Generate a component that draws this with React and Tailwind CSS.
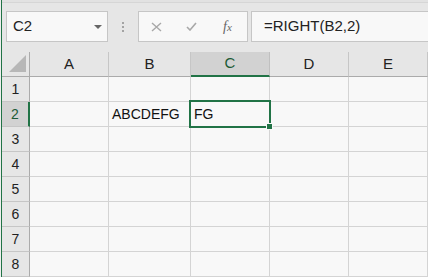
import { useState } from "react";

const columns = [
  { name: "A", w: "w-[79px]" },
  { name: "B", w: "w-[82px]" },
  { name: "C", w: "w-[79px]" },
  { name: "D", w: "w-[79px]" },
  { name: "E", w: "flex-1" },
];

const rows = [1, 2, 3, 4, 5, 6, 7, 8];

const cells = {
  B2: "ABCDEFG",
  C2: "FG",
};

const Toolbar = ({ active, formula }) => {
  return (
    <div className="flex items-center h-[31px] mt-[8px] mb-[10px]">
      {/* name box */}
      <div className="ml-[4px] w-[102px] h-full flex items-center justify-between border border-[#c6c6c6] bg-[#f8f8f8] pl-[6px] pr-[5px]">
        <span className="text-[15px] text-[#222]">{active}</span>
        <span className="w-0 h-0 border-l-[4px] border-r-[4px] border-t-[4px] border-l-transparent border-r-transparent border-t-[#666]"></span>
      </div>

      <div className="ml-[14px] flex flex-col gap-[2px]">
        <span className="w-[2px] h-[2px] bg-[#a3a3a3]"></span>
        <span className="w-[2px] h-[2px] bg-[#a3a3a3]"></span>
        <span className="w-[2px] h-[2px] bg-[#a3a3a3]"></span>
      </div>

      {/* cancel / enter / fx */}
      <div className="ml-[14px] w-[110px] h-full flex items-center border border-[#c6c6c6] bg-[#f8f8f8]">
        <svg className="ml-[12px]" width="11" height="10" viewBox="0 0 11 10">
          <path d="M1 1 L10 9 M10 1 L1 9" stroke="#a8a8a8" strokeWidth="1.4" fill="none" />
        </svg>
        <svg className="ml-[24px]" width="11" height="9" viewBox="0 0 11 9">
          <path d="M1 5 L4 8 L10 1" stroke="#a8a8a8" strokeWidth="1.6" fill="none" />
        </svg>
        <span className="ml-[26px] text-[14px] italic text-[#666] font-['Liberation_Serif',serif] leading-none">
          f<span className="text-[11px]">x</span>
        </span>
      </div>

      {/* formula */}
      <div className="ml-[3px] flex-1 h-full flex items-center border border-r-0 border-[#c6c6c6] bg-[#f8f8f8] pl-[12px]">
        <span className="text-[15px] text-[#222]">{formula}</span>
      </div>
    </div>
  );
};

const App = () => {
  let [active] = useState({ col: "C", row: 2 });
  let activeName = active.col + active.row;

  return (
    <div className="w-[428px] h-[277px] overflow-hidden bg-[#eeeeee] pl-px font-['Liberation_Sans',Arial,sans-serif]">
      <div className="h-full flex flex-col border-l border-[#217346] bg-[#e6e6e6]">
        <div className="h-[3px] bg-[#e2e2e2] border-b border-[#d6d6d6]"></div>

        <Toolbar active={activeName} formula="=RIGHT(B2,2)" />

        {/* column headers */}
        <div className="flex h-[25px]">
          <div className="w-[28px] relative border-r border-b border-[#ababab]">
            <div className="absolute left-[7px] top-[3px] w-[17px] h-[17px] bg-[#b7b7b7] [clip-path:polygon(100%_0,100%_100%,0_100%)]"></div>
          </div>
          {columns.map((c) => {
            let selected = c.name == active.col;
            return (
              <div
                key={c.name}
                className={
                  c.w +
                  " flex items-center justify-center text-[15px] " +
                  (selected
                    ? "bg-[#d2d2d2] border-b-2 border-b-[#217346] border-r border-r-[#c0c0c0] text-[#1c5a36]"
                    : "border-b border-b-[#ababab] border-r border-r-[#c6c6c6] text-[#222]")
                }
              >
                {c.name}
              </div>
            );
          })}
        </div>

        {/* rows */}
        {rows.map((r) => {
          let rowSelected = r == active.row;
          return (
            <div key={r} className="flex h-[25px] shrink-0">
              <div
                className={
                  "w-[28px] flex items-center justify-center text-[14px] border-b border-b-[#c6c6c6] " +
                  (rowSelected
                    ? "bg-[#d2d2d2] border-r-2 border-r-[#217346] text-[#1c5a36]"
                    : "border-r border-r-[#ababab] text-[#222]")
                }
              >
                {r}
              </div>
              {columns.map((c) => {
                let key = c.name + r;
                let isActive = key == activeName;
                return (
                  <div
                    key={key}
                    className={
                      c.w +
                      " relative flex items-center pl-[3px] text-[14px] text-[#111] bg-[#f8f8f8] border-r border-b border-[#d4d4d4]"
                    }
                  >
                    {cells[key] || ""}
                    {isActive && (
                      <div className="absolute z-10 -left-[2px] -top-[2px] w-[82px] h-[28px] border-2 border-[#217346]">
                        <div className="absolute -right-[4px] -bottom-[4px] w-[7px] h-[7px] bg-[#217346] border border-[#f8f8f8]"></div>
                      </div>
                    )}
                  </div>
                );
              })}
            </div>
          );
        })}
      </div>
    </div>
  );
};

export default App;
